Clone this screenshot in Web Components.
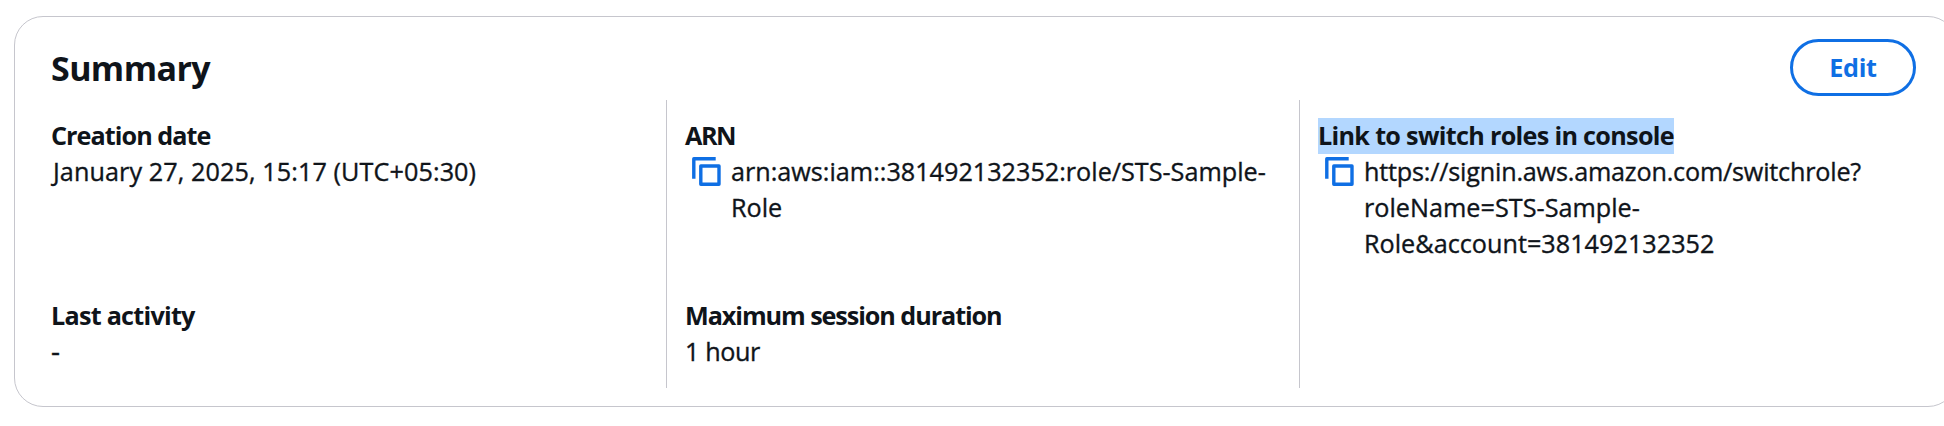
<!DOCTYPE html>
<html lang="en">
<head>
<meta charset="utf-8">
<title>Role summary</title>
<style>
html,body{margin:0;height:426px;overflow:hidden;background:#fff}
body{font:400 25.2px/36px "Open Sans","Noto Sans",sans-serif;color:#0f141a}
</style>
</head>
<body>
<summary-card heading="Summary">
  <action-button slot="actions">Edit</action-button>
  <info-column>
    <key-value label="Creation date" tall style="--label-spacing:-.95px"><span style="padding-left:2px;letter-spacing:.09px">January 27, 2025, 15:17 (UTC+05:30)</span></key-value>
    <key-value label="Last activity" style="--label-spacing:-.76px"><span style="font-size:28px;line-height:34px">-</span></key-value>
  </info-column>
  <info-column divided>
    <key-value label="ARN" tall style="--label-spacing:-1.5px"><copy-text>arn:aws:iam::381492132352:role/STS-Sample-Role</copy-text></key-value>
    <key-value label="Maximum session duration" style="--label-spacing:-1.08px"><span style="letter-spacing:-.4px">1 hour</span></key-value>
  </info-column>
  <info-column divided>
    <key-value label="Link to switch roles in console" tall selected style="--label-spacing:-.7px"><copy-text><span style="letter-spacing:-.2px">https://signin.aws.amazon.com/switchrole?</span><span style="letter-spacing:.02px">roleName=STS-Sample-Role&amp;account=381492132352</span></copy-text></key-value>
  </info-column>
</summary-card>
<script>
class BaseElement extends HTMLElement {
  constructor() {
    super();
    this.attachShadow({mode: 'open'}).innerHTML = this.constructor.markup;
  }
}

customElements.define('summary-card', class extends BaseElement {
  static markup = `<style>
    :host{display:block;box-sizing:border-box;width:1943px;height:391px;margin:16px 0 0 14px;padding:22px 40px 0 36px;border:1px solid #c6c6cd;border-radius:29px}
    header{display:flex;justify-content:space-between;align-items:center;height:57px}
    h2{margin:0;font-size:34px;line-height:44px;font-weight:700;letter-spacing:-.6px;padding-top:1px}
    .columns{display:grid;grid-template-columns:615px 633px 1fr;height:288px;margin-top:4px}
  </style>
  <header><h2></h2><slot name="actions"></slot></header>
  <div class="columns"><slot></slot></div>`;
  connectedCallback() { this.shadowRoot.querySelector('h2').textContent = this.getAttribute('heading'); }
});

customElements.define('action-button', class extends BaseElement {
  static markup = `<style>
    :host{display:block}
    button{box-sizing:border-box;width:126px;height:57px;padding:0 0 2px;border:3px solid #0f6fe4;border-radius:29px;background:#fff;color:#0f6fe4;font:inherit;font-weight:700;letter-spacing:-.3px}
  </style><button><slot></slot></button>`;
});

customElements.define('info-column', class extends BaseElement {
  static markup = `<style>
    :host{display:flex;flex-direction:column;gap:36px;box-sizing:border-box;padding:18px 0}
    :host([divided]){border-left:1px solid #c6c6cd;padding-left:18px}
  </style><slot></slot>`;
});

customElements.define('key-value', class extends BaseElement {
  static markup = `<style>
    :host{display:block}
    :host([tall]){height:144px}
    .label{font-weight:700;letter-spacing:var(--label-spacing,-.9px);height:36px}
    .label span{display:block;width:fit-content;height:36px;line-height:34px}
    .value{height:36px;margin-top:-1px;-webkit-text-stroke:.35px currentColor}
    :host([selected]) .label span{background:#b3d7ff}
  </style><div class="label"><span></span></div><div class="value"><slot></slot></div>`;
  connectedCallback() { this.shadowRoot.querySelector('.label span').textContent = this.getAttribute('label'); }
});

customElements.define('copy-text', class extends BaseElement {
  static markup = `<style>
    :host{display:flex;padding-left:7px}
    svg{flex:none;width:29px;height:36px;margin:1px 10px 0 0}
    .text{min-width:0;max-width:556px}
  </style>
  <svg viewBox="0 0 29 36" fill="none" stroke="#0f6fe4" stroke-width="3.4" stroke-linejoin="round"><path d="M23.7 4.8H1.8V24.8"/><rect x="8.8" y="12" width="18.2" height="18.2"/></svg>
  <div class="text"><slot></slot></div>`;
});
</script>
</body>
</html>
